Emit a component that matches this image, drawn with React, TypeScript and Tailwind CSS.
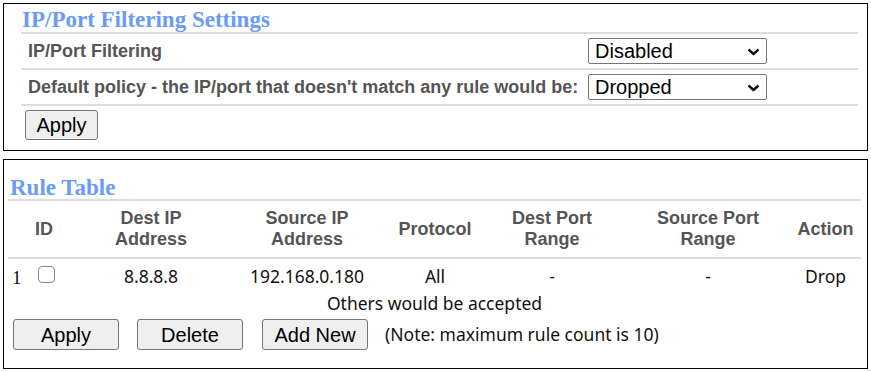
import React from 'react';

const sans = { fontFamily: '"Liberation Sans", Arial, sans-serif' };

function Select({ value }: { value: string }) {
  return (
    <div className="relative w-[179px] h-[26px]">
      <select
        defaultValue={value}
        className="w-full h-full appearance-none bg-white border border-[#767676] rounded-[2px] pl-[6px] text-[20px] leading-[24px] font-normal text-black font-['Liberation_Sans',Arial,sans-serif] outline-none"
      >
        <option>{value}</option>
      </select>
      <svg
        className="absolute right-[7px] top-[10px] pointer-events-none"
        width="13"
        height="8"
        viewBox="0 0 13 8"
      >
        <path d="M1.5 1.5 L6.5 6 L11.5 1.5" fill="none" stroke="#111" strokeWidth="2.4" strokeLinejoin="round" />
      </svg>
    </div>
  );
}

function Btn({ label, w }: { label: string; w: string }) {
  return (
    <button
      className={`${w} bg-[#efefef] border border-[#767676] rounded-[3px] text-[20px] leading-none text-black font-['Liberation_Sans',Arial,sans-serif]`}
    >
      {label}
    </button>
  );
}

export default function App() {
  const cols = 'grid grid-cols-[72px_142px_170px_86px_148px_164px_71px]';
  return (
    <div className="w-[871px] h-[372px] bg-white pt-[3px] px-[3px]">
      {/* Filtering settings */}
      <div className="h-[148px] border border-black">
        <div className="ml-[17px] w-[837px]">
          <div className="h-[30px] pt-[3px] leading-[26px] pl-[1px] border-b-2 border-[#dddddd] text-[23px] font-bold text-[#6a9bf8] font-['Liberation_Serif',Cambria,serif]">
            IP/Port Filtering Settings
          </div>
          <div
            className="h-[36px] flex items-center border-b-2 border-[#dddddd] text-[18px] font-bold text-[#555]"
            style={sans}
          >
            <div className="w-[567px] pl-[7px]">IP/Port Filtering</div>
            <Select value="Disabled" />
          </div>
          <div
            className="h-[36px] flex items-center border-b-2 border-[#dddddd] text-[18px] font-bold text-[#555]"
            style={sans}
          >
            <div className="w-[567px] pl-[7px]">
              Default policy - the IP/port that doesn't match any rule would be:
            </div>
            <Select value="Dropped" />
          </div>
          <div className="pt-[4px] pl-[4px]">
            <Btn label="Apply" w="w-[73px] h-[30px]" />
          </div>
        </div>
      </div>

      {/* Rule table */}
      <div className="mt-[8px] h-[210px] border border-black">
        <div className="ml-[4px] w-[853px] pt-[13px]">
          <div className="h-[28px] pt-[2px] leading-[25px] pl-[2px] border-b-2 border-[#dddddd] text-[23px] font-bold text-[#6a9bf8] font-['Liberation_Serif',Cambria,serif]">
            Rule Table
          </div>
          <div
            className={`${cols} h-[58px] items-center text-center border-b-2 border-[#dddddd] text-[18px] leading-[21px] font-bold text-[#555]`}
            style={sans}
          >
            <div>ID</div>
            <div>Dest IP<br />Address</div>
            <div>Source IP<br />Address</div>
            <div>Protocol</div>
            <div>Dest Port<br />Range</div>
            <div>Source Port<br />Range</div>
            <div>Action</div>
          </div>
          <div
            className={`${cols} h-[34px] items-center text-center text-[17.5px] text-[#111] font-['Noto_Sans',sans-serif]`}
          >
            <div className="flex items-center pl-[4px]">
              <span className="w-[26px] text-left text-[19px] pt-[4px] font-['Liberation_Serif',Cambria,serif]">1</span>
              <span className="w-[17px] h-[17px] border border-[#8a8a8a] rounded-[4px] bg-white -mt-[4px]" />
            </div>
            <div>8.8.8.8</div>
            <div>192.168.0.180</div>
            <div>All</div>
            <div>-</div>
            <div>-</div>
            <div>Drop</div>
          </div>
          <div className="h-[20px] leading-[20px] text-center text-[17.5px] text-[#111] font-['Noto_Sans',sans-serif]">
            Others would be accepted
          </div>
          <div className="mt-[6px] pl-[5px] flex items-center">
            <Btn label="Apply" w="w-[106px] h-[31px]" />
            <div className="w-[18px]" />
            <Btn label="Delete" w="w-[106px] h-[31px]" />
            <div className="w-[19px]" />
            <Btn label="Add New" w="w-[106px] h-[31px]" />
            <span className="ml-[17px] text-[17.5px] text-[#111] font-['Noto_Sans',sans-serif]">
              (Note: maximum rule count is 10)
            </span>
          </div>
        </div>
      </div>
    </div>
  );
}
